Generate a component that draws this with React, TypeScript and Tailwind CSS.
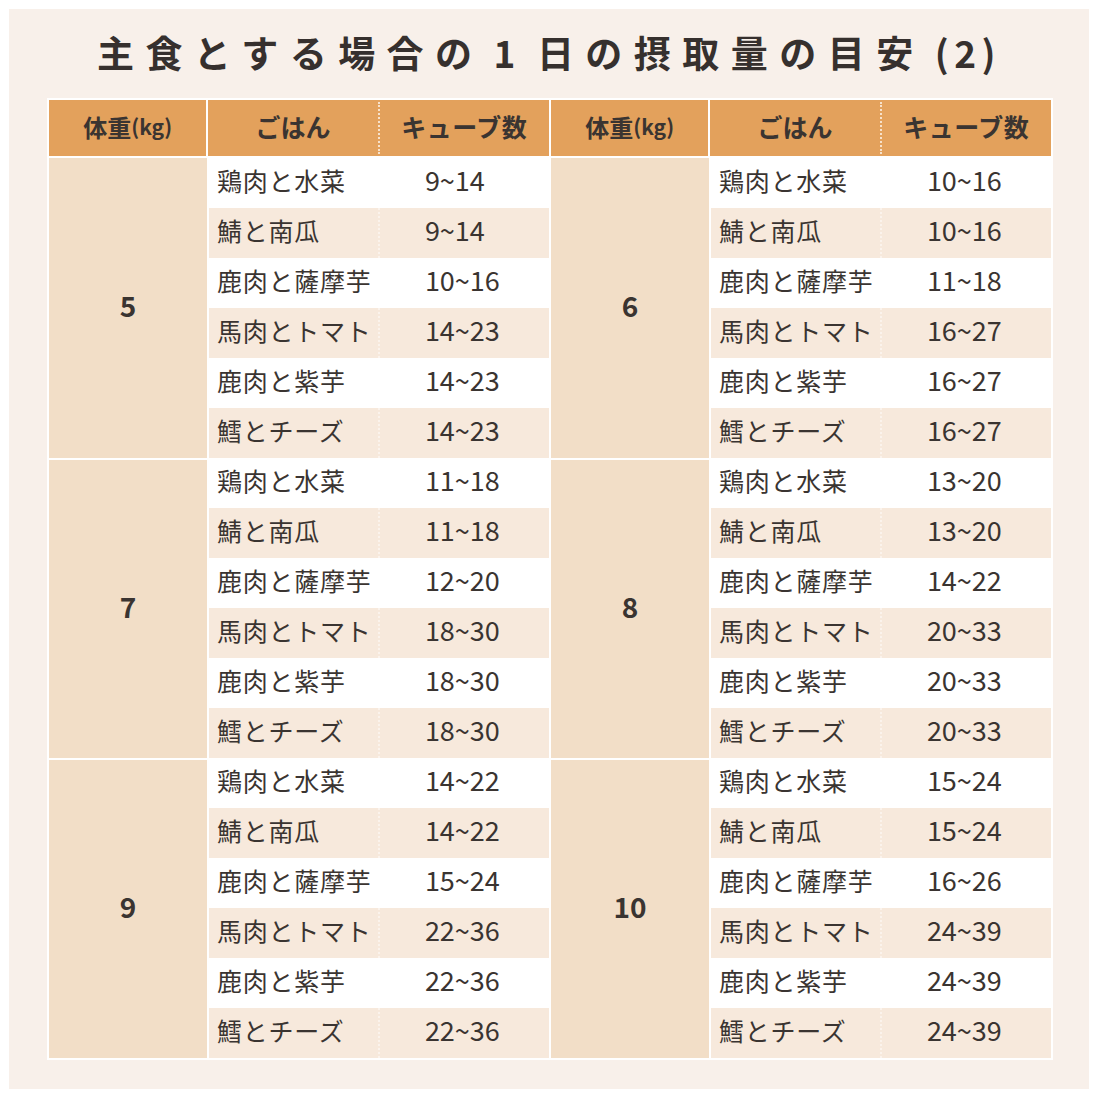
import React from "react";

const foods = ["鶏肉と水菜", "鯖と南瓜", "鹿肉と薩摩芋", "馬肉とトマト", "鹿肉と紫芋", "鱈とチーズ"];

type Group = { w: string; vals: string[] };

const left: Group[] = [
  { w: "5", vals: ["9~14", "9~14", "10~16", "14~23", "14~23", "14~23"] },
  { w: "7", vals: ["11~18", "11~18", "12~20", "18~30", "18~30", "18~30"] },
  { w: "9", vals: ["14~22", "14~22", "15~24", "22~36", "22~36", "22~36"] },
];
const right: Group[] = [
  { w: "6", vals: ["10~16", "10~16", "11~18", "16~27", "16~27", "16~27"] },
  { w: "8", vals: ["13~20", "13~20", "14~22", "20~33", "20~33", "20~33"] },
  { w: "10", vals: ["15~24", "15~24", "16~26", "24~39", "24~39", "24~39"] },
];

const font = { fontFamily: '"Noto Sans CJK JP", "Noto Sans", sans-serif' };

function Header() {
  return (
    <div className="flex h-[56px] bg-[#e3a15c] text-[#3a3431] font-bold">
      <div className="w-[158px] flex items-center justify-center pb-[3px] text-[24px]">
        体重<span className="text-[21px]">(kg)</span>
      </div>
      <div className="w-[2px] bg-white" />
      <div className="w-[170px] flex items-center justify-center pb-[3px] text-[25px]">ごはん</div>
      <div className="w-0 border-l-2 border-dotted border-[#f7e2cc] my-[2px]" />
      <div className="w-[170px] flex items-center justify-center pb-[3px] text-[25px] tracking-[0.02em]">キューブ数</div>
    </div>
  );
}

function Half({ groups }: { groups: Group[] }) {
  return (
    <div className="flex flex-col w-[500px]">
      <Header />
      <div className="h-[2px] bg-white" />
      {groups.map((g, gi) => (
        <div key={gi} className="flex h-[300px]">
          <div
            className={
              "w-[158px] bg-[#f2dec7] flex items-center justify-center pb-[6px] text-[28px] font-bold text-[#3a3431] " +
              (gi > 0 ? "border-t-2 border-white" : "")
            }
          >
            {g.w}
          </div>
          <div className="w-[2px] bg-white" />
          <div className="w-[340px] flex flex-col">
            {foods.map((f, i) => (
              <div
                key={i}
                className={"h-[50px] flex items-center " + (i % 2 === 1 ? "bg-[#f7e9dc]" : "bg-white")}
              >
                <div className="w-[170px] pl-[8px] pb-[5px] text-[25px] text-[#3a3431] tracking-[0.03em]">{f}</div>
                <div className={"w-0 h-full border-l-2 border-dotted " + (i % 2 === 1 ? "border-[#fbf3ec]" : "border-white")} />
                <div className="w-[170px] pl-[45px] pb-[5px] text-[27px] text-[#3a3431]">{g.vals[i]}</div>
              </div>
            ))}
          </div>
        </div>
      ))}
    </div>
  );
}

export default function App() {
  return (
    <div className="w-[1098px] h-[1098px] bg-white p-[9px]" style={font}>
      <div className="w-[1080px] h-[1080px] bg-[#f8f0ea] flex flex-col items-center">
        <div className="h-[89px] flex items-center justify-center pb-[2px] text-[37px] font-bold tracking-[0.31em] text-[#36302e]">
          主食とする場合の<span className="mx-[10px]">1</span>日の摂取量の目安<span className="ml-[10px] tracking-[0.15em]">(2)</span>
        </div>
        <div className="bg-white p-[2px] flex gap-[2px] ml-[2px]">
          <Half groups={left} />
          <Half groups={right} />
        </div>
      </div>
    </div>
  );
}
